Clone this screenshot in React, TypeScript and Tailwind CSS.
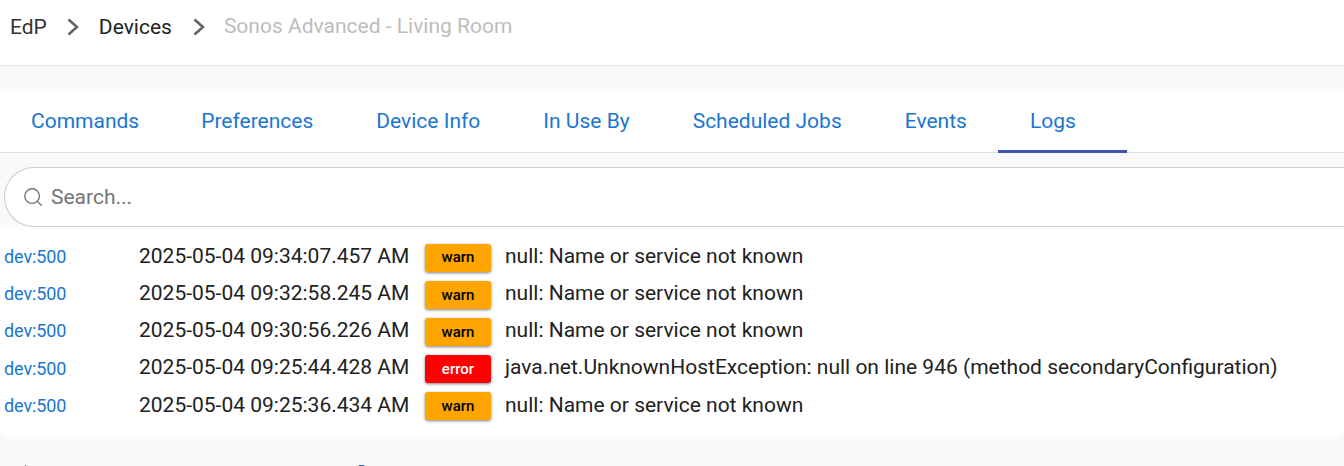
import { Search } from "lucide-react";

const tabs = ["Commands", "Preferences", "Device Info", "In Use By", "Scheduled Jobs", "Events", "Logs"];

const logs = [
  { time: "2025-05-04 09:34:07.457 AM", level: "warn", msg: "null: Name or service not known" },
  { time: "2025-05-04 09:32:58.245 AM", level: "warn", msg: "null: Name or service not known" },
  { time: "2025-05-04 09:30:56.226 AM", level: "warn", msg: "null: Name or service not known" },
  { time: "2025-05-04 09:25:44.428 AM", level: "error", msg: "java.net.UnknownHostException: null on line 946 (method secondaryConfiguration)" },
  { time: "2025-05-04 09:25:36.434 AM", level: "warn", msg: "null: Name or service not known" },
];

function Chevron({ className }: { className: string }) {
  return (
    <svg width="12" height="18" viewBox="0 0 12 18" fill="none" stroke="#616161" strokeWidth="2.5" className={className}>
      <polyline points="1.5,1.5 10,9 1.5,16.5" />
    </svg>
  );
}

export default function App() {
  return (
    <div className="h-[466px] w-[1344px] overflow-hidden bg-[#f9f9f9] font-['Roboto',sans-serif]">
      {/* Breadcrumb */}
      <header className="flex h-[67px] items-start border-b-2 border-[#eeeef3] bg-white pl-[10px] pt-[14px] text-[21px] leading-[26px]">
        <span className="text-[#333333]">EdP</span>
        <Chevron className="ml-[20px] mt-[4px]" />
        <span className="ml-[20px] text-[#212121]">Devices</span>
        <Chevron className="ml-[21px] mt-[4px]" />
        <span className="ml-[19px] -mt-[1px] text-[#bdbdbd]">Sonos Advanced - Living Room</span>
      </header>

      {/* Tabs */}
      <nav className="mt-[22px] flex h-[64px] items-stretch border-b border-[#e0e0e0] bg-white">
        {tabs.map((tab) => (
          <div
            key={tab}
            className={
              tab === "Logs"
                ? "-mb-px -ml-px flex w-[129px] items-center border-b-[3px] border-[#3f51b5] pl-[32px] pt-[5px] text-[21px] text-[#1976d2]"
                : "-mb-px flex items-center pl-[31px] pr-[32px] pt-[2px] text-[21px] text-[#1976d2] first:pr-[31px]"
            }
          >
            {tab}
          </div>
        ))}
      </nav>

      {/* Search */}
      <div className="ml-[4px] mt-[14px] flex h-[60px] items-center rounded-l-[30px] border border-r-0 border-[#cccccc] bg-white pl-[17px]">
        <Search size={22} strokeWidth={1.5} className="text-[#757575]" />
        <span className="ml-[7px] pt-[2px] text-[21px] text-[#757575]">Search...</span>
      </div>

      {/* Log rows */}
      <div className="flex h-[210px] flex-col rounded-b-lg bg-white pl-[5px] pt-[11px]">
        {logs.map((log) => (
          <div key={log.time} className="flex h-[37.2px] items-center">
            <span className="-ml-px w-[135px] text-[18px] tracking-[-0.1px] text-[#1976d2]">dev:500</span>
            <span className="w-[286px] text-[21px] text-[#212121]">{log.time}</span>
            <span
              className={
                log.level === "error"
                  ? "mt-[2px] flex h-[28px] w-[66px] items-center justify-center rounded-[3px] bg-[#ff0000] text-[15px] font-medium text-white shadow-[0_1px_3px_rgba(0,0,0,0.5)]"
                  : "mt-[2px] flex h-[28px] w-[66px] items-center justify-center rounded-[3px] bg-[#ffa500] text-[15px] font-medium text-black shadow-[0_1px_3px_rgba(0,0,0,0.5)]"
              }
            >
              {log.level}
            </span>
            <span className="ml-[14px] text-[21px] text-[#212121]">{log.msg}</span>
          </div>
        ))}
      </div>

      {/* Tops of the next row's icons, cut off by the window */}
      <div className="mt-[28px] flex h-[2px] items-start pl-[25px]">
        <span className="h-[2px] w-[1px] bg-[#3f51b5]" />
        <span className="ml-[332px] h-[2px] w-[7px] rounded-t-[2px] bg-[#3f51b5]" />
      </div>
    </div>
  );
}
